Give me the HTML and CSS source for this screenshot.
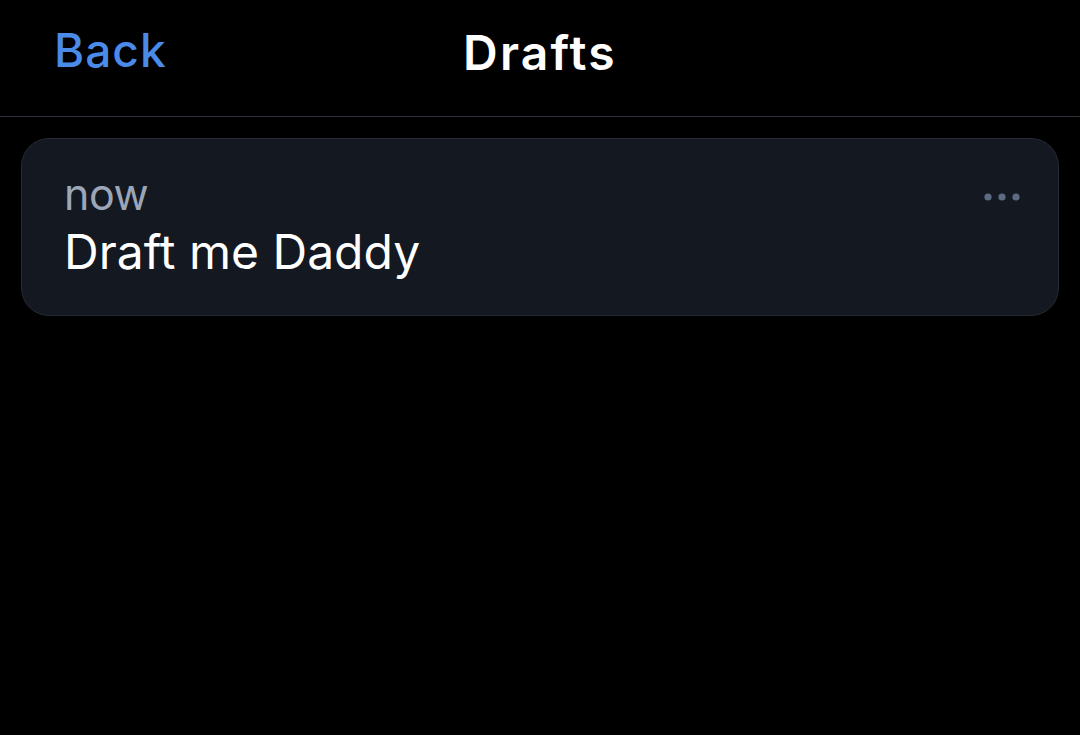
FILE: index.html
```html
<!DOCTYPE html>
<html lang="en">
<head>
    <meta charset="UTF-8">
    <meta name="viewport" content="width=device-width, initial-scale=1.0">
    <title>Drafts</title>
    <link rel="stylesheet" href="styles.css">
</head>
<body>
    <div class="header">
        <a class="back" href="#">Back</a>
        <h1 class="title">Drafts</h1>
    </div>

    <div class="list">
        <div class="draft">
            <div class="draft-body">
                <div class="draft-time">now</div>
                <div class="draft-text">Draft me Daddy</div>
            </div>
            <button class="draft-menu" aria-label="More">
                <svg width="36" height="10" viewBox="0 0 36 10">
                    <circle cx="4" cy="5" r="3.6" fill="#5d6b80"/>
                    <circle cx="18" cy="5" r="3.6" fill="#5d6b80"/>
                    <circle cx="32" cy="5" r="3.6" fill="#5d6b80"/>
                </svg>
            </button>
        </div>
    </div>
</body>
</html>
```

FILE: styles.css
```css
body {
    margin: 0;
    background: #000;
    color: #fff;
    font-family: Inter, "Noto Sans", sans-serif;
}
.header {
    position: relative;
    height: 116px;
    border-bottom: 1px solid #2c313a;
    display: flex;
    align-items: center;
    justify-content: center;
}
.back {
    position: absolute;
    left: 54px;
    top: 22px;
    color: #4a8ae8;
    text-decoration: none;
    font-size: 46px;
    font-weight: 500;
    letter-spacing: 1px;
}
.title {
    margin: 0 0 12px 0;
    font-size: 48px;
    font-weight: 600;
    letter-spacing: 2.2px;
}
.list {
    padding: 21px 21px;
}
.draft {
    display: flex;
    justify-content: space-between;
    background: #141821;
    border: 1px solid #252a34;
    border-radius: 28px;
    padding: 32px 38px 28px 42px;
}
.draft-time {
    color: #9ba6b8;
    font-size: 43px;
    line-height: 46px;
    letter-spacing: -0.5px;
}
.draft-text {
    font-size: 48px;
    line-height: 70px;
}
.draft-menu {
    background: none;
    border: none;
    padding: 0;
    margin-top: 19px;
    height: 10px;
    cursor: pointer;
}
```
